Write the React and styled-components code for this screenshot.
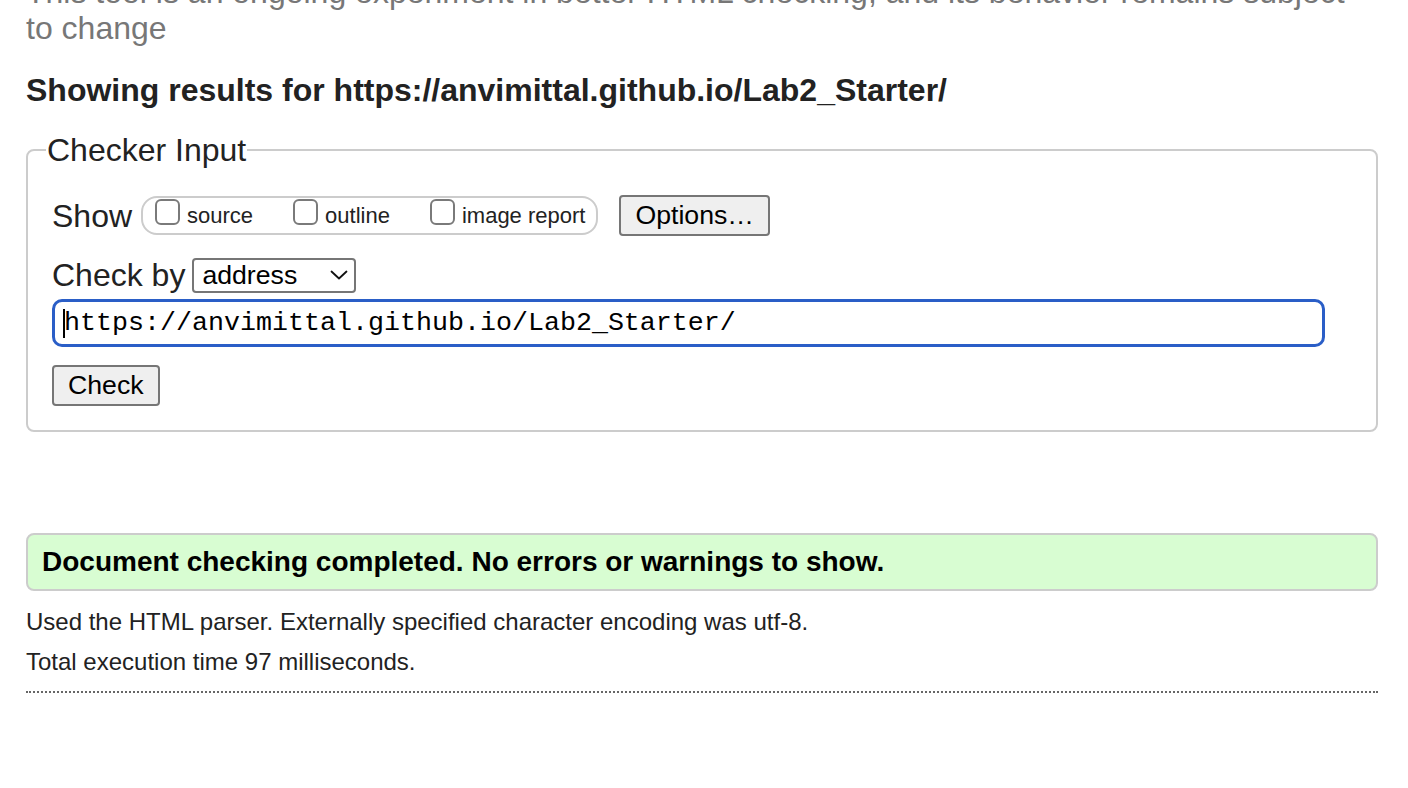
import React from "react";
import styled, { createGlobalStyle } from "styled-components";

const GlobalStyle = createGlobalStyle`
  html, body { margin: 0; padding: 0; background: #ffffff; }
  body {
    font-family: "Liberation Sans", Arial, Helvetica, sans-serif;
    color: #222222;
    overflow: hidden;
  }
`;

const Page = styled.main`
  width: 1352px;
  padding: 0 30px 0 26px;
`;

const Intro = styled.p`
  margin: -26px 0 0;
  font-size: 32px;
  line-height: 36px;
  color: #777777;
`;

const Heading = styled.h2`
  margin: 26px 0 0;
  font-size: 32px;
  line-height: 36px;
  font-weight: 700;
  color: #222222;
`;

const Fieldset = styled.fieldset`
  margin: 24px 0 0;
  padding: 0 24px 24px;
  border: 2px solid #cccccc;
  border-radius: 8px;
  min-width: 0;
`;

const Legend = styled.legend`
  font-size: 32px;
  line-height: 36px;
  padding: 0 1px;
  margin-left: -6px;
  color: #222222;
`;

const Row = styled.div`
  display: flex;
  align-items: center;
  margin-top: ${(p) => p.$top}px;
`;

const Label = styled.span`
  font-size: 32px;
  line-height: 36px;
  color: #222222;
`;

const Group = styled.span`
  display: inline-flex;
  align-items: center;
  gap: 40px;
  height: 35px;
  margin-left: 9px;
  padding: 0 11px 0 12px;
  border: 2px solid #cccccc;
  border-radius: 16px;
`;

const Choice = styled.label`
  display: inline-flex;
  align-items: center;
  gap: 7px;
  font-size: 22px;
  line-height: 24px;
  color: #222222;
`;

const Box = styled.input.attrs({ type: "checkbox" })`
  appearance: none;
  -webkit-appearance: none;
  margin: -7px 0 0;
  width: 25px;
  height: 26px;
  box-sizing: border-box;
  border: 2px solid #7a7a7a;
  border-radius: 6px;
  background: #ffffff;
`;

const Button = styled.button`
  font-family: "Liberation Sans", Arial, sans-serif;
  font-size: 26.67px;
  line-height: 31px;
  color: #000000;
  background: #efefef;
  border: 2px solid #767676;
  border-radius: 4px;
  height: 41px;
  padding: 0 ${(p) => p.$pad}px;
  margin-left: ${(p) => p.$left || 0}px;
`;

const SelectWrap = styled.span`
  position: relative;
  display: inline-block;
  margin-left: 7px;
`;

const Select = styled.select`
  appearance: none;
  -webkit-appearance: none;
  width: 164px;
  height: 35px;
  box-sizing: border-box;
  padding: 0 0 0 8px;
  font-family: "Liberation Sans", Arial, sans-serif;
  font-size: 26.67px;
  color: #000000;
  background: #ffffff;
  border: 2px solid #767676;
  border-radius: 4px;
  display: block;
`;

const Chevron = styled.svg`
  position: absolute;
  right: 8px;
  top: 12px;
  pointer-events: none;
`;

const InputWrap = styled.div`
  position: relative;
  margin-top: 6px;
  width: 1273px;
`;

const UrlInput = styled.input`
  display: block;
  width: 100%;
  height: 48px;
  box-sizing: border-box;
  padding: 0 9px;
  font-family: "Liberation Mono", "DejaVu Sans Mono", monospace;
  font-size: 26.67px;
  color: #000000;
  background: #ffffff;
  border: 3px solid #2a5ec7;
  border-radius: 10px;
  outline: none;
`;

const Caret = styled.span`
  position: absolute;
  left: 11px;
  top: 10px;
  width: 2px;
  height: 29px;
  background: #000000;
`;

const Result = styled.p`
  margin: 101px 0 0;
  height: 54px;
  display: flex;
  align-items: center;
  padding: 0 14px;
  background: #d8fdd2;
  border: 2px solid #cccccc;
  border-radius: 8px;
  font-size: 28px;
  font-weight: 700;
  color: #000000;
`;

const Note = styled.p`
  margin: ${(p) => p.$top}px 0 0;
  font-size: 24px;
  line-height: 28px;
  color: #222222;
`;

const Rule = styled.div`
  margin-top: 15px;
  border-bottom: 2px dotted #666666;
`;

export default function App() {
  return (
    <>
      <GlobalStyle />
      <Page>
        <Intro>
          This tool is an ongoing experiment in better HTML checking, and its behavior remains subject
          <br />
          to change
        </Intro>
        <Heading>Showing results for https://anvimittal.github.io/Lab2_Starter/</Heading>
        <Fieldset>
          <Legend>Checker Input</Legend>
          <Row $top={27}>
            <Label>Show</Label>
            <Group>
              <Choice><Box />source</Choice>
              <Choice><Box />outline</Choice>
              <Choice><Box />image report</Choice>
            </Group>
            <Button $pad={14} $left={21}>Options…</Button>
          </Row>
          <Row $top={21}>
            <Label>Check by</Label>
            <SelectWrap>
              <Select defaultValue="address">
                <option value="address">address</option>
                <option value="file">file upload</option>
                <option value="text">text input</option>
              </Select>
              <Chevron width="18" height="10" viewBox="0 0 18 10">
                <path d="M1.5 1.5 L9 8.5 L16.5 1.5" fill="none" stroke="#111" strokeWidth="1.8" strokeLinecap="round" strokeLinejoin="round" />
              </Chevron>
            </SelectWrap>
          </Row>
          <InputWrap>
            <UrlInput readOnly value="https://anvimittal.github.io/Lab2_Starter/" />
            <Caret />
          </InputWrap>
          <Row $top={18}>
            <Button $pad={14}>Check</Button>
          </Row>
        </Fieldset>
        <Result>Document checking completed. No errors or warnings to show.</Result>
        <Note $top={17}>Used the HTML parser. Externally specified character encoding was utf-8.</Note>
        <Note $top={12}>Total execution time 97 milliseconds.</Note>
        <Rule />
      </Page>
    </>
  );
}
